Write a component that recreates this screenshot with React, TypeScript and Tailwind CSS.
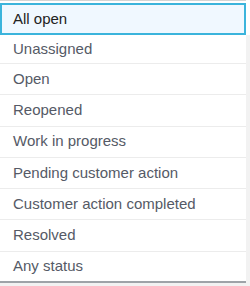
const statuses = [
  "Unassigned",
  "Open",
  "Reopened",
  "Work in progress",
  "Pending customer action",
  "Customer action completed",
  "Resolved",
  "Any status",
];

export default function App() {
  return (
    <div className="flex h-[286px] w-[250px] overflow-hidden bg-white font-['Liberation_Sans',Arial,sans-serif] text-[15px]">
      <div className="flex w-[246px] flex-col">
        <div className="flex flex-col border-t border-[#d4d4d4] pt-[2px]">
          {/* selected */}
          <div className="flex h-[32px] items-center border-2 border-[#3bb4dc] bg-[#f0f8ff] pl-[11px] text-[#222]">
            All open
          </div>
          {statuses.map((s, i) => (
            <div
              key={s}
              className={`flex items-center pl-[13px] text-[#555a66] ${
                i === 0 ? "h-[29px]" : "h-[31.3px]"
              } ${
                i === statuses.length - 1
                  ? "border-b-2 border-[#9ea3a8]"
                  : "border-b border-[#ececec]"
              }`}
            >
              {s}
            </div>
          ))}
        </div>
        <div className="flex-1 bg-[#f2f2f2]" />
      </div>
      <div className="flex w-[4px] flex-col">
        <div className="h-[35px] bg-white" />
        <div className="flex-1 bg-[#f2f2f2]" />
      </div>
    </div>
  );
}
